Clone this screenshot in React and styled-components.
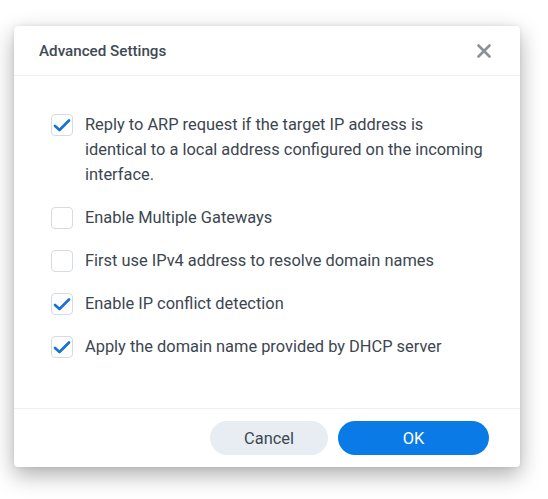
import React from "react";
import styled, { createGlobalStyle } from "styled-components";

const GlobalStyle = createGlobalStyle`
  body {
    margin: 0;
    background: #ffffff;
    font-family: Roboto, "Liberation Sans", sans-serif;
  }
`;

const Page = styled.div`
  width: 548px;
  height: 499px;
  padding: 26px 0 0 14px;
  box-sizing: border-box;
`;

const Dialog = styled.div`
  width: 506px;
  height: 441px;
  background: #fff;
  border-radius: 4px;
  box-shadow: 0 8px 22px rgba(0, 0, 0, 0.32), 0 0 4px rgba(0, 0, 0, 0.08);
  display: flex;
  flex-direction: column;
`;

const Header = styled.div`
  height: 49px;
  display: flex;
  align-items: center;
  justify-content: space-between;
  padding: 0 28px 0 25px;
  border-bottom: 1px solid #efefef;
`;

const Title = styled.h2`
  margin: 0;
  font-size: 15.2px;
  font-weight: 500;
  color: #404a55;
`;

const Close = styled.button`
  border: none;
  background: none;
  padding: 0;
  width: 16px;
  height: 16px;
  display: flex;
  cursor: pointer;
`;

const Body = styled.div`
  flex: 1;
  padding: 36px 32px 0 37px;
  display: flex;
  flex-direction: column;
  gap: 18px;
`;

const Option = styled.label`
  display: flex;
  align-items: flex-start;
  gap: 12px;
  font-size: 16.4px;
  line-height: 25px;
  color: #3c4650;
`;

const Box = styled.span`
  flex: none;
  width: 20px;
  height: 20px;
  margin-top: 2px;
  border: 1px solid #d5dbe1;
  border-radius: 4px;
  background: #fff;
  display: flex;
  align-items: center;
  justify-content: center;
`;

const Footer = styled.div`
  height: 58px;
  border-top: 1px solid #efefef;
  display: flex;
  align-items: center;
  justify-content: flex-end;
  gap: 10px;
  padding-right: 31px;
`;

const Button = styled.button`
  width: ${(p) => p.$w}px;
  height: 34px;
  border: none;
  border-radius: 17px;
  font-family: Roboto, "Liberation Sans", sans-serif;
  font-size: 16.4px;
  background: ${(p) => (p.$primary ? "#0a7be6" : "#e8edf3")};
  color: ${(p) => (p.$primary ? "#ffffff" : "#3c4650")};
  cursor: pointer;
`;

// blue tick inside a checked box
const Check = () => (
  <svg width="18" height="15" viewBox="0 0 18 15">
    <path
      d="M2 8 L6.5 12 L16 2.5"
      fill="none"
      stroke="#1672d4"
      strokeWidth="2.7"
      strokeLinecap="round"
      strokeLinejoin="round"
    />
  </svg>
);

const options = [
  {
    text: "Reply to ARP request if the target IP address is identical to a local address configured on the incoming interface.",
    checked: true,
  },
  { text: "Enable Multiple Gateways", checked: false },
  { text: "First use IPv4 address to resolve domain names", checked: false },
  { text: "Enable IP conflict detection", checked: true },
  { text: "Apply the domain name provided by DHCP server", checked: true },
];

const App = () => {
  return (
    <Page>
      <GlobalStyle />
      <Dialog>
        <Header>
          <Title>Advanced Settings</Title>
          <Close>
            <svg width="16" height="16" viewBox="0 0 16 16">
              <path
                d="M2.5 2.5 L13.5 13.5 M13.5 2.5 L2.5 13.5"
                stroke="#8b9199"
                strokeWidth="2.6"
                strokeLinecap="round"
              />
            </svg>
          </Close>
        </Header>
        <Body>
          {options.map((o) => (
            <Option key={o.text}>
              <Box>{o.checked && <Check />}</Box>
              <span>{o.text}</span>
            </Option>
          ))}
        </Body>
        <Footer>
          <Button $w={118}>Cancel</Button>
          <Button $w={151} $primary>
            OK
          </Button>
        </Footer>
      </Dialog>
    </Page>
  );
};

export default App;
